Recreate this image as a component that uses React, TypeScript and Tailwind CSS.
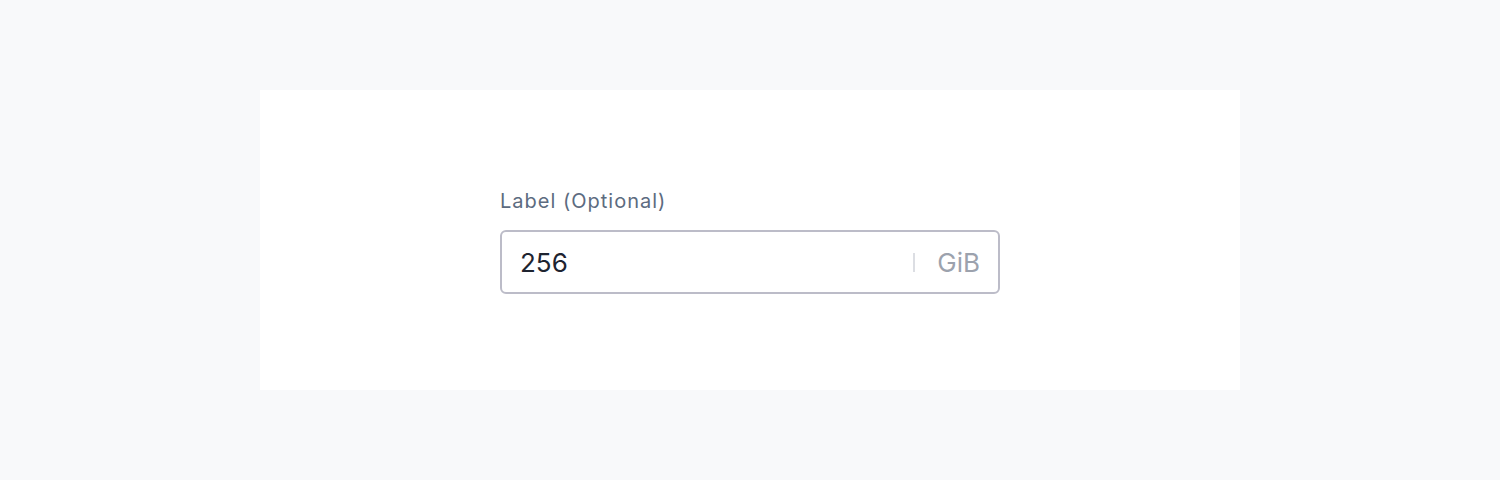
import React from 'react';

export default function App() {
  return (
    <div className="min-h-[480px] bg-[#f8f9fa] flex items-center justify-center font-['Inter',sans-serif]">
      <div className="w-[980px] h-[300px] bg-white flex items-center justify-center">
        <div className="w-[500px] flex flex-col gap-[18px] pt-[4px]">
          <label className="text-[20px] leading-[22px] tracking-[0.05em] text-[#5c6b80]">Label (Optional)</label>
          <div className="h-[64px] rounded-[6px] border-2 border-[#bcbcc8] flex items-center pl-[18px] pr-[18px]">
            <input
              defaultValue="256"
              className="flex-1 min-w-0 bg-transparent outline-none text-[26px] text-[#1e2430]"
            />
            <span className="w-[2px] h-[19px] bg-[#dcdee3] mx-[22px]" />
            <span className="text-[26px] text-[#9ca2ad]">GiB</span>
          </div>
        </div>
      </div>
    </div>
  );
}
